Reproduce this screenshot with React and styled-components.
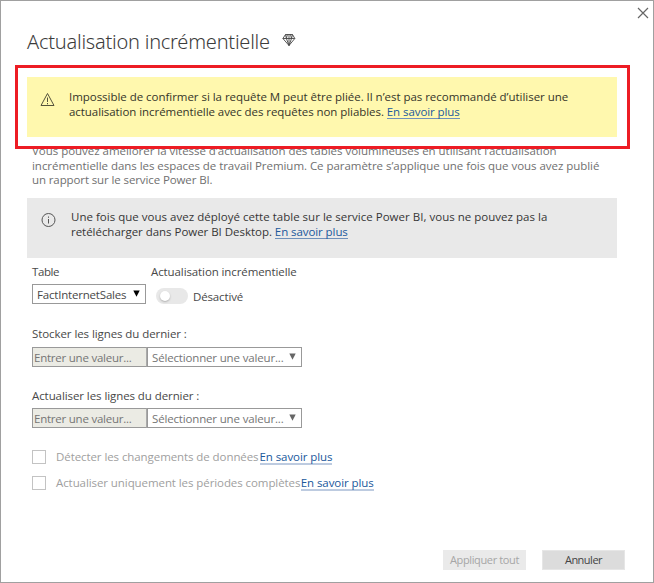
import React from 'react';
import styled, { createGlobalStyle } from 'styled-components';

const GlobalStyle = createGlobalStyle`
  * { box-sizing: border-box; }
  body {
    margin: 0;
    background: #fff;
    color: #555;
    font: 11.5px/15px "Open Sans", "Noto Sans", sans-serif;
  }
`;

const Dialog = styled.main`
  display: flex;
  flex-direction: column;
  width: 654px;
  height: 583px;
  border: 1px solid #a0a0a0;
  background: #fff;
  overflow: hidden;
`;

const TitleBar = styled.div`
  display: flex;
  justify-content: flex-end;
  height: 25px;
  padding: 6px 3px 0 0;
`;

const CloseButton = styled.button`
  width: 13px;
  height: 13px;
  padding: 0;
  border: 0;
  background: none;
  svg { display: block; }
`;

const Heading = styled.header`
  display: flex;
  gap: 12px;
  height: 39px;
  padding-left: 26px;
  svg { margin-top: 7px; }
`;

const Title = styled.h1`
  margin: 0;
  color: #3c3c3c;
  font: 300 20px/32px "Noto Sans", sans-serif;
  letter-spacing: -0.23px;
  white-space: nowrap;
`;

const Callout = styled.section`
  position: relative;
  z-index: 1;
  flex: none;
  width: 615px;
  height: 84px;
  margin-left: 14px;
  padding: 9px;
  border: 3px solid #ed1c24;
  background: #fff;
`;

const Banner = styled.div`
  display: flex;
  flex: none;
  gap: ${(p) => p.$gap};
  width: 590px;
  height: 60px;
  margin: ${(p) => p.$margin || 0};
  padding: ${(p) => p.$padding};
  background: ${(p) => p.$background};
  color: ${(p) => p.$color};
  svg { flex: none; margin-top: ${(p) => p.$iconTop}; }
`;

const Line = styled.span`
  display: block;
  letter-spacing: ${(p) => p.$track || 0}px;
  white-space: nowrap;
`;

const Track = styled.span`
  letter-spacing: ${(p) => p.$track}px;
`;

const Link = styled.a`
  display: inline-block;
  height: ${(p) => (p.$thick ? 15 : 15)}px;
  margin-left: ${(p) => p.$indent || 0}px;
  border-bottom: ${(p) => (p.$thick ? '2px solid #bdcbe0' : '1px solid #6f91bb')};
  color: #20589c;
  letter-spacing: -0.08px;
  line-height: ${(p) => (p.$thick ? 14 : 15)}px;
  vertical-align: top;
  white-space: nowrap;
`;

const Description = styled.p`
  flex: none;
  height: 43px;
  margin: -5px 0 0 31px;
  color: #707070;
  line-height: 14px;
`;

const Intro = styled(Line)`
  height: 15px;
`;

const Form = styled.form`
  display: flex;
  flex-direction: column;
  padding: 6px 0 0 31px;
`;

const TopFields = styled.div`
  display: grid;
  grid-template-columns: 114px auto;
  justify-content: start;
  column-gap: 5px;
`;

const Field = styled.div`
  display: flex;
  flex-direction: column;
  gap: ${(p) => p.$gap}px;
`;

const Label = styled.label`
  height: 15px;
  color: #484848;
  letter-spacing: ${(p) => p.$track}px;
  white-space: nowrap;
`;

const Select = styled.div`
  display: flex;
  align-items: flex-start;
  justify-content: space-between;
  width: ${(p) => p.$width}px;
  height: 20px;
  padding: 2px 5px 0 4px;
  border: 1px solid #999;
  background: #fff;
  color: ${(p) => p.$color};
  white-space: nowrap;
  svg { margin-top: 3px; }
`;

const SwitchRow = styled.div`
  display: flex;
  align-items: flex-end;
  gap: 5px;
  padding: 9px 0 0 5px;
`;

const Switch = styled.span`
  display: flex;
  width: 32px;
  height: 16px;
  padding: 3px 4px;
  border-radius: 8px;
  background: #e8e8e8;
`;

const Knob = styled.span`
  width: 10px;
  height: 10px;
  border-radius: 50%;
  background: #fff;
  box-shadow: 0 1px 2px rgba(0, 0, 0, 0.25);
`;

const PeriodField = styled(Field)`
  margin-top: ${(p) => p.$top}px;
`;

const InputGroup = styled.div`
  display: flex;
`;

const Input = styled.div`
  width: 115px;
  height: 20px;
  padding: 2px 0 0 1px;
  border: 1px solid #999;
  border-right-color: #aaa;
  background: #ebebe4;
  color: #757575;
  white-space: nowrap;
`;

const CheckRow = styled.div`
  display: flex;
  height: 14px;
  margin-top: ${(p) => p.$top}px;
  color: #a0a0a0;
  line-height: 14px;
`;

const Checkbox = styled.span`
  width: 14px;
  height: 14px;
  margin-right: 10px;
  border: 1px solid #c3c3c3;
`;

const Footer = styled.footer`
  display: flex;
  justify-content: flex-end;
  gap: 16px;
  margin-top: auto;
  padding: 0 28px 12px 0;
`;

const Button = styled.button`
  width: 83px;
  height: 20px;
  padding: 0 0 1px;
  border: 1px solid ${(p) => (p.$muted ? '#eaeaea' : '#e6e6e6')};
  background: ${(p) => (p.$muted ? '#eaeaea' : '#dcdcdc')};
  color: ${(p) => (p.$muted ? '#a6a6a6' : '#444')};
  font: 11px/17px "Open Sans", sans-serif;
  letter-spacing: ${(p) => (p.$muted ? -0.36 : -0.5)}px;
  white-space: nowrap;
`;

const Arrow = ({ color }) => (
  <svg width="7" height="7" viewBox="0 0 7 7"><path d="M0.3 0.5H6.7L3.5 6.8Z" fill={color} /></svg>
);

const Diamond = () => (
  <svg width="15" height="15" viewBox="0 0 15 15" fill="none" stroke="#444" strokeWidth="0.9" strokeLinejoin="round">
    <path d="M3.5 1.5H10.5L12.8 5.5L7 12.5L.9 5.5ZM.9 5.5H12.8M3.5 1.5L4.4 5.5L7 12.5L9.5 5.5L10.5 1.5M4.4 5.5L5.4 1.5M9.5 5.5L8.5 1.5M7 1.5V12.5" />
  </svg>
);

const periods = [
  { label: 'Stocker les lignes du dernier :', top: 22, gap: 6 },
  { label: 'Actualiser les lignes du dernier :', top: 21, gap: 5 },
];

const checks = [
  { label: 'Détecter les changements de données', top: 22, track: -0.08, indent: 1 },
  { label: 'Actualiser uniquement les périodes complètes', top: 12, track: -0.08, indent: 0.4 },
];

export default function App() {
  return (
    <>
      <GlobalStyle />
      <Dialog>
        <TitleBar>
          <CloseButton type="button" aria-label="Fermer">
            <svg width="13" height="13" viewBox="0 0 13 13" stroke="#666" strokeWidth="1.2">
              <path d="M1 1L11 11M11 1L1 11" />
            </svg>
          </CloseButton>
        </TitleBar>
        <Heading>
          <Title>Actualisation incrémentielle</Title>
          <Diamond />
        </Heading>
        <Callout>
          <Banner $background="#fff8ae" $color="#35352a" $padding="12px 0 0 13px" $gap="14px" $iconTop="3px">
            <svg width="15" height="15" viewBox="0 0 15 15" fill="none" stroke="#55533c">
              <path d="M7.5 1.5L14 13.5H1Z" />
              <path d="M7.5 5.5V10M7.5 11V12.3" />
            </svg>
            <div>
              <Line $track={-0.035}>Impossible de confirmer si la requête M peut être pliée. Il n’est pas recommandé d’utiliser une</Line>
              <Line>
                <Track $track={-0.06}>actualisation incrémentielle avec des requêtes non pliables. </Track>
                <Link>En savoir plus</Link>
              </Line>
            </div>
          </Banner>
        </Callout>
        <Description>
          <Intro $track={-0.03}>Vous pouvez améliorer la vitesse d’actualisation des tables volumineuses en utilisant l’actualisation</Intro>
          <Line $track={-0.04}>incrémentielle dans les espaces de travail Premium. Ce paramètre s’applique une fois que vous avez publié</Line>
          <Line $track={-0.11}>un rapport sur le service Power BI.</Line>
        </Description>
        <Banner $background="#e9e9e9" $color="#363636" $margin="11px 0 0 26px" $padding="11px 0 0 14px" $gap="15px" $iconTop="4px">
          <svg width="15" height="15" viewBox="0 0 15 15" fill="none" stroke="#555">
            <circle cx="7.5" cy="7" r="6.5" />
            <path d="M7.5 6V10.5M7.5 3.5V4.8" />
          </svg>
          <div>
            <Line $track={0.02}>Une fois que vous avez déployé cette table sur le service Power BI, vous ne pouvez pas la</Line>
            <Line>
              <Track $track={-0.03}>retélécharger dans Power BI Desktop. </Track>
              <Link>En savoir plus</Link>
            </Line>
          </div>
        </Banner>
        <Form>
          <TopFields>
            <Field $gap={5}>
              <Label $track={-0.4}>Table</Label>
              <Select $width={114} $color="#484848">
                <Track $track={-0.19}>FactInternetSales</Track>
                <Arrow color="#000" />
              </Select>
            </Field>
            <Field $gap={0}>
              <Label $track={-0.1}>Actualisation incrémentielle</Label>
              <SwitchRow>
                <Switch role="switch" aria-checked="false"><Knob /></Switch>
                <Label $track={-0.15}>Désactivé</Label>
              </SwitchRow>
            </Field>
          </TopFields>
          {periods.map((p) => (
            <PeriodField key={p.label} $top={p.top} $gap={p.gap}>
              <Label $track={-0.08}>{p.label}</Label>
              <InputGroup>
                <Input><Track $track={-0.23}>Entrer une valeur...</Track></Input>
                <Select $width={155} $color="#757575">
                  <Track $track={-0.16}>Sélectionner une valeur...</Track>
                  <Arrow color="#666" />
                </Select>
              </InputGroup>
            </PeriodField>
          ))}
          {checks.map((c) => (
            <CheckRow key={c.label} $top={c.top}>
              <Checkbox role="checkbox" aria-checked="false" />
              <Track $track={c.track}>{c.label}</Track>
              <Link $thick $indent={c.indent}>En savoir plus</Link>
            </CheckRow>
          ))}
        </Form>
        <Footer>
          <Button type="button" $muted>Appliquer tout</Button>
          <Button type="button">Annuler</Button>
        </Footer>
      </Dialog>
    </>
  );
}
